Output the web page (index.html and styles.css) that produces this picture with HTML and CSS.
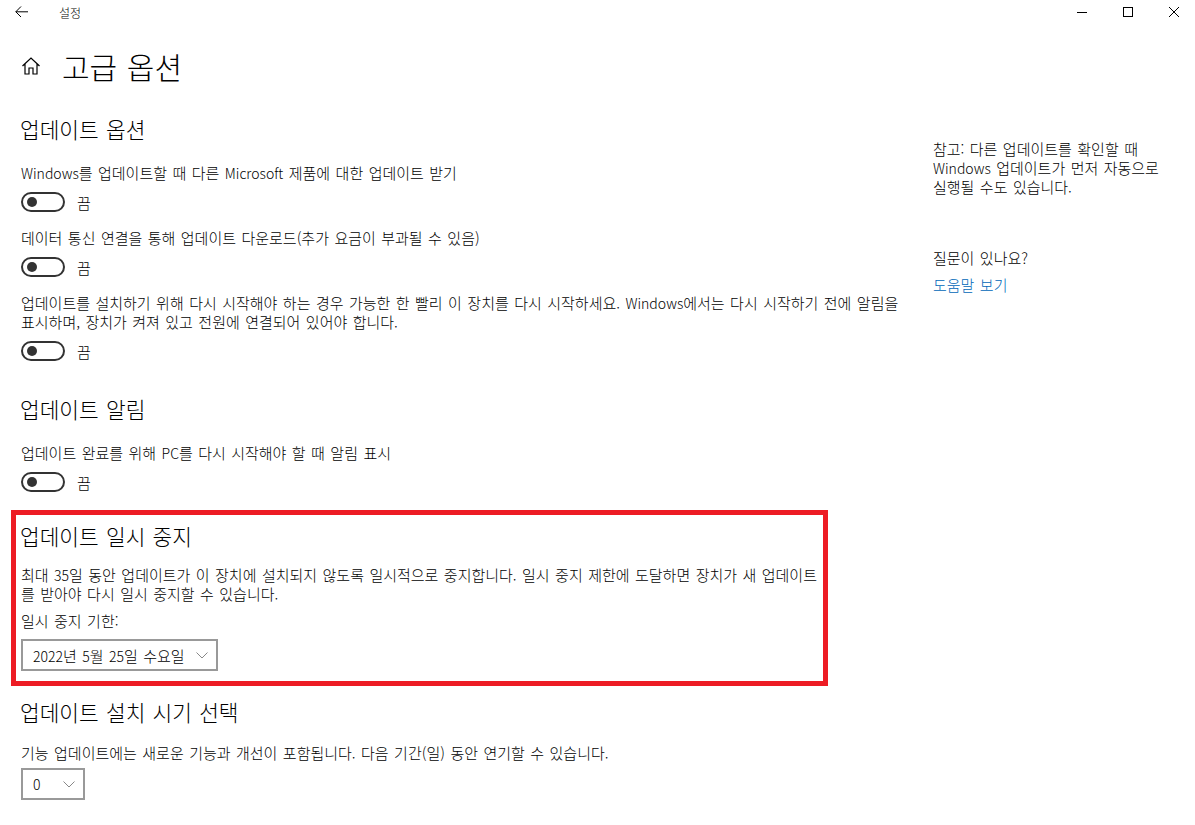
FILE: index.html
```html
<!DOCTYPE html>
<html lang="ko">
<head>
  <meta charset="UTF-8">
  <title>설정</title>
  <link rel="stylesheet" href="styles.css">
</head>
<body>
  <div class="titlebar">
    <svg class="back" width="13" height="12" viewBox="0 0 13 12"><path d="M6 .5.8 5.800 6 11M.8 5.800H13" fill="none" stroke="#000" stroke-width="1"/></svg>
    <span class="app-name">설정</span>
    <div class="window-buttons">
      <svg width="10" height="10" viewBox="0 0 10 10"><path d="M0 5.500h10" stroke="#000" fill="none"/></svg>
      <svg width="10" height="10" viewBox="0 0 10 10"><rect x=".5" y=".5" width="9" height="9" stroke="#000" fill="none"/></svg>
      <svg width="10" height="10" viewBox="0 0 10 10"><path d="M0 0l10 10M10 0 0 10" stroke="#000" fill="none"/></svg>
    </div>
  </div>

  <div class="page-title">
    <svg class="home" width="20" height="20" viewBox="0 0 20 20"><path d="M1.500 10 10 2l8.500 8M4 8v10h4v-6h4v6h4V8" fill="none" stroke="#000" stroke-width="1.200"/></svg>
    <h1>고급 옵션</h1>
  </div>

  <div class="content">
    <div class="main">
      <h2>업데이트 옵션</h2>
      <p class="opt-text first"><span class="latin">Windows</span>를 업데이트할 때 다른 <span class="latin">Microsoft</span> 제품에 대한 업데이트 받기</p>
      <div class="toggle-row"><span class="toggle"></span><span>끔</span></div>
      <p class="opt-text">데이터 통신 연결을 통해 업데이트 다운로드(추가 요금이 부과될 수 있음)</p>
      <div class="toggle-row"><span class="toggle"></span><span>끔</span></div>
      <p class="opt-text">
        <span class="line">업데이트를 설치하기 위해 다시 시작해야 하는 경우 가능한 한 빨리 이 장치를 다시 시작하세요. <span class="latin">Windows</span>에서는 다시 시작하기 전에 알림을</span>
        <span class="line">표시하며, 장치가 켜져 있고 전원에 연결되어 있어야 합니다.</span>
      </p>
      <div class="toggle-row"><span class="toggle"></span><span>끔</span></div>

      <h2 class="section">업데이트 알림</h2>
      <p class="opt-text first">업데이트 완료를 위해 <span class="latin">PC</span>를 다시 시작해야 할 때 알림 표시</p>
      <div class="toggle-row"><span class="toggle"></span><span>끔</span></div>

      <div class="highlight">
        <h2>업데이트 일시 중지</h2>
        <p class="pause-text">
          <span class="line">최대 <span class="latin">35</span>일 동안 업데이트가 이 장치에 설치되지 않도록 일시적으로 중지합니다. 일시 중지 제한에 도달하면 장치가 새 업데이트</span>
          <span class="line">를 받아야 다시 일시 중지할 수 있습니다.</span>
        </p>
        <p class="pause-label">일시 중지 기한:</p>
        <div class="select date-select">
          <span><span class="latin">2022</span>년 <span class="latin">5</span>월 <span class="latin">25</span>일 수요일</span>
          <svg width="12" height="7" viewBox="0 0 12 7"><path d="M.5.5 6 6l5.500-5.500" fill="none" stroke="#888"/></svg>
        </div>
      </div>

      <h2 class="section-last">업데이트 설치 시기 선택</h2>
      <p class="opt-text defer-text">기능 업데이트에는 새로운 기능과 개선이 포함됩니다. 다음 기간(일) 동안 연기할 수 있습니다.</p>
      <div class="select num-select">
        <span class="latin">0</span>
        <svg width="12" height="7" viewBox="0 0 12 7"><path d="M.5.5 6 6l5.500-5.500" fill="none" stroke="#888"/></svg>
      </div>
    </div>

    <div class="side">
      <p>
        <span class="line">참고: 다른 업데이트를 확인할 때</span>
        <span class="line"><span class="latin">Windows</span> 업데이트가 먼저 자동으로</span>
        <span class="line">실행될 수도 있습니다.</span>
      </p>
      <p class="question">질문이 있나요?</p>
      <a class="help-link" href="#">도움말 보기</a>
    </div>
  </div>
</body>
</html>
```

FILE: styles.css
```css
html, body {
  height: 825px;
  overflow: hidden;
}

body {
  margin: 0;
  background: #fff;
  color: #000;
  font-family: "Noto Sans CJK KR", "Noto Sans", sans-serif;
  font-size: 15px;
  font-weight: 300;
  word-spacing: 1.250px;
  line-height: 19px;
}

p {
  margin: 0;
}

.line {
  display: block;
}

.latin {
  font-size: 14px;
  line-height: 1;
}

.titlebar {
  display: flex;
  align-items: center;
  height: 24px;
  padding-left: 15px;
}

.back {
  margin-right: 31px;
}

.app-name {
  font-size: 12px;
}

.window-buttons {
  display: flex;
  gap: 36px;
  margin-left: auto;
  padding-right: 16px;
}

.page-title {
  display: flex;
  align-items: center;
  height: 46px;
  margin-top: 19px;
  padding-left: 21px;
}

.home {
  margin-right: 21px;
}

h1 {
  margin: 0;
  font-size: 30px;
  font-weight: 300;
}

h2 {
  margin: 0;
  font-size: 21.400px;
  line-height: 30px;
  font-weight: 300;
}

.content {
  display: flex;
  padding: 25px 0 0 21px;
}

.main {
  width: 880px;
}

.main > h2 {
  margin-left: -1px;
}

.opt-text {
  margin-top: 14px;
  width: 880px;
}

.opt-text.first {
  margin-top: 19px;
}

.defer-text {
  margin-top: 16px;
}

.toggle-row {
  display: flex;
  align-items: center;
  gap: 12px;
  height: 24px;
  margin-top: 8px;
}

.toggle {
  position: relative;
  box-sizing: border-box;
  width: 44px;
  height: 20px;
  border: 2px solid #333;
  border-radius: 10px;
}

.toggle::after {
  content: "";
  position: absolute;
  left: 4px;
  top: 3px;
  width: 10px;
  height: 10px;
  border-radius: 50%;
  background: #333;
}

.section {
  margin-top: 31px;
}

.highlight {
  box-sizing: border-box;
  width: 817px;
  height: 176px;
  margin: 16px 0 0 -10px;
  padding: 6px 0 0 4px;
  border: 5px solid #ed1c24;
}

.pause-text {
  width: 800px;
  margin: 14px 0 0 1px;
}

.pause-label {
  margin: 8px 0 0 1px;
}

.select {
  display: flex;
  align-items: center;
  justify-content: space-between;
  box-sizing: border-box;
  height: 32px;
  padding: 0 8px 0 10px;
  border: 2px solid #999;
}

.date-select {
  width: 197px;
  margin: 9px 0 0 1px;
}

.num-select {
  width: 64px;
  margin-top: 6px;
}

.section-last {
  margin-top: 11px;
}

.side {
  width: 232px;
  margin-left: 32px;
  padding-top: 25px;
}

.question {
  margin-top: 52px;
}

.help-link {
  display: block;
  margin-top: 8px;
  color: #0067b8;
  text-decoration: none;
}
```
